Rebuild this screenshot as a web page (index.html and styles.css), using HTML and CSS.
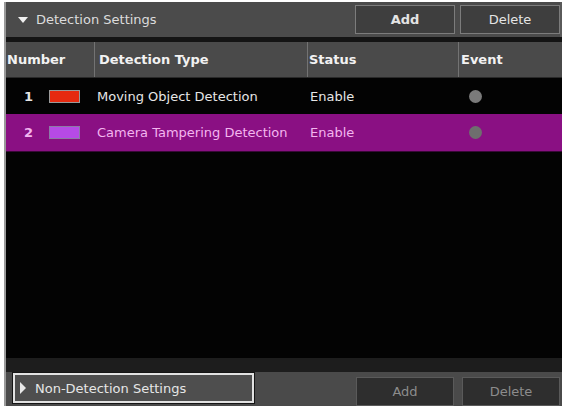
FILE: index.html
```html
<!DOCTYPE html>
<html lang="en">
<head>
  <meta charset="UTF-8" />
  <title>Detection Settings</title>
  <link rel="stylesheet" href="styles.css">
</head>
<body>
  <div class="panel">
    <!-- Top toolbar -->
    <div class="toolbar">
      <div class="section-title"><span class="arrow-down"></span>Detection Settings</div>
      <div class="actions">
        <button class="btn btn-bold">Add</button>
        <button class="btn">Delete</button>
      </div>
    </div>
    <div class="divider"></div>

    <!-- Detection list -->
    <div class="list">
      <div class="row head">
        <div class="cell c-num">Number</div>
        <div class="cell c-type">Detection Type</div>
        <div class="cell c-status">Status</div>
        <div class="cell c-event">Event</div>
      </div>
      <div class="row">
        <div class="cell c-num"><span class="num">1</span><span class="swatch red"></span></div>
        <div class="cell c-type">Moving Object Detection</div>
        <div class="cell c-status">Enable</div>
        <div class="cell c-event"><span class="dot"></span></div>
      </div>
      <div class="row selected">
        <div class="cell c-num"><span class="num">2</span><span class="swatch purple"></span></div>
        <div class="cell c-type">Camera Tampering Detection</div>
        <div class="cell c-status">Enable</div>
        <div class="cell c-event"><span class="dot"></span></div>
      </div>
    </div>

    <div class="divider bottom"></div>

    <!-- Bottom toolbar -->
    <div class="bottom-bar">
      <button class="toggle"><span class="arrow-right"></span>Non-Detection Settings</button>
      <div class="actions">
        <button class="btn disabled">Add</button>
        <button class="btn disabled">Delete</button>
      </div>
    </div>
  </div>
</body>
</html>
```

FILE: styles.css
```css
* {
  margin: 0;
  padding: 0;
  box-sizing: border-box;
  font-family: 'DejaVu Sans', Tahoma, Verdana, sans-serif;
}

html, body {
  height: 100%;
}

body {
  background: #ffffff;
  overflow: hidden;
}

.panel {
  margin: 2px 0 0 4px;
  height: 404px;
  display: flex;
  flex-direction: column;
  background: #030303;
  border-left: 2px solid #9a9a9a;
}

.toolbar {
  height: 35px;
  display: flex;
  justify-content: space-between;
  align-items: center;
  background: #4b4b4b;
  border-right: 2px solid #5a5a5a;
}

.section-title {
  display: flex;
  align-items: center;
  color: #dcdcdc;
  font-size: 13px;
  padding-left: 12px;
}

.arrow-down {
  width: 0;
  height: 0;
  border-left: 5px solid transparent;
  border-right: 5px solid transparent;
  border-top: 6px solid #f0f0f0;
  margin-right: 8px;
}

.arrow-right {
  width: 0;
  height: 0;
  border-top: 6px solid transparent;
  border-bottom: 6px solid transparent;
  border-left: 6px solid #e8e8e8;
  margin-right: 9px;
}

.actions {
  display: flex;
  gap: 5px;
}

.btn {
  width: 100px;
  height: 29px;
  background: #3e3e3e;
  border: 1px solid #7c7c7c;
  color: #e4e4e4;
  font-size: 13px;
  cursor: pointer;
}

.btn-bold {
  font-weight: bold;
}

.divider {
  height: 5px;
  background: #141414;
}

.list {
  flex: 1;
  background: #030303;
}

.row {
  display: grid;
  grid-template-columns: 88px 213px 151px 1fr;
  height: 36px;
  color: #e6e6e6;
  font-size: 13px;
}

.row.head {
  background: #4a4a4a;
  color: #f2f2f2;
  font-weight: bold;
  border-bottom: 1px solid #2a2a2a;
}

.row.head .cell + .cell {
  border-left: 1px solid #737373;
}

.row.selected {
  background: #8a1083;
  color: #f3b6ef;
  height: 38px;
  border-bottom: 1px solid #3a0838;
}

.cell {
  display: flex;
  align-items: center;
  padding-left: 3px;
  white-space: nowrap;
}

.head .c-num {
  padding-left: 1px;
}

.head .c-type {
  padding-left: 4px;
}

.head .c-status {
  padding-left: 1px;
}

.head .c-event {
  padding-left: 2px;
}

.c-num {
  padding-left: 18px;
}

.num {
  font-weight: bold;
  width: 25px;
}

.swatch {
  width: 31px;
  height: 13px;
  border: 1px solid #9a9a9a;
}

.swatch.red {
  background: #e62a10;
}

.swatch.purple {
  background: #b64ae6;
  border-color: #8c7aa6;
}

.c-status {
  padding-left: 3px;
}

.c-event {
  padding-left: 11px;
}

.dot {
  width: 13px;
  height: 13px;
  border-radius: 50%;
  background: #7a7a7a;
}

.selected .dot {
  background: #6e6e6e;
}

.divider.bottom {
  height: 14px;
  background: #1d1d1d;
}

.bottom-bar {
  height: 34px;
  display: flex;
  justify-content: space-between;
  align-items: flex-end;
  background: #4a4a4a;
  padding-left: 7px;
  padding-right: 2px;
}

.toggle {
  align-self: flex-start;
  margin-top: 1px;
  width: 241px;
  height: 30px;
  display: flex;
  align-items: center;
  padding-left: 5px;
  background: #4e4e4e;
  border: 2px solid #e2e2e2;
  box-shadow: 0 0 0 1px #151515;
  color: #e6e6e6;
  font-size: 13px;
}

.bottom-bar .actions {
  gap: 8px;
}

.btn.disabled {
  width: 98px;
  background: #2e2e2e;
  border-color: #5a5a5a;
  color: #8c8c8c;
  font-weight: normal;
}
```
